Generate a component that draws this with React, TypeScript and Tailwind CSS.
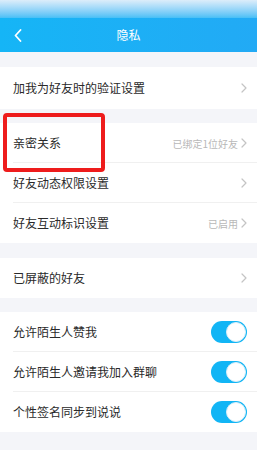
import React from "react";

const font = { fontFamily: '"Noto Sans CJK SC", "Noto Sans", sans-serif' };

function Chevron() {
  return (
    <svg width="6" height="10" viewBox="0 0 6 10" className="ml-[3px]">
      <path d="M1 1 L5 5 L1 9" fill="none" stroke="#c4c4c4" strokeWidth="1.2" strokeLinecap="round" strokeLinejoin="round" />
    </svg>
  );
}

function Toggle() {
  return (
    <div className="w-[36px] h-[22px] rounded-full bg-[#12b5f5] flex items-center justify-end pr-[1px]">
      <div className="w-[20px] h-[20px] rounded-full bg-white border border-[#d9eef8]" />
    </div>
  );
}

function Row({ label, right, toggle, divider, h = "h-[40px]" }: { label: string; right?: string; toggle?: boolean; divider?: boolean; h?: string }) {
  return (
    <div className={`relative ${h} flex items-center pl-[13px] pr-[10px] bg-white`}>
      <span className="text-[12px] text-[#2a2a2a] flex-1">{label}</span>
      {toggle ? (
        <Toggle />
      ) : (
        <div className="flex items-center">
          {right && <span className="text-[10px] text-[#b8b8b8]">{right}</span>}
          <Chevron />
        </div>
      )}
      {divider && <div className="absolute left-[13px] right-0 bottom-0 h-px bg-[#f0f0f0]" />}
    </div>
  );
}

export default function App() {
  return (
    <div className="relative w-[257px] h-[450px] bg-[#f4f5f9] overflow-hidden" style={font}>
      <div className="h-[52px] flex flex-col bg-gradient-to-r from-[#15b5f6] to-[#22aaf5]">
        <div className="h-[18px] bg-gradient-to-b from-[#dcedfa] to-[#46bff6]" />
        <div className="flex-1 relative flex items-center justify-center">
          <svg width="8" height="13" viewBox="0 0 8 13" className="absolute left-[14px] top-[11px]">
            <path d="M6.5 1 L1.5 6.5 L6.5 12" fill="none" stroke="#ffffff" strokeWidth="1.8" strokeLinecap="round" strokeLinejoin="round" />
          </svg>
          <span className="text-white text-[12px]">隐私</span>
        </div>
      </div>
      <div className="h-[15px]" />
      <Row label="加我为好友时的验证设置" h="h-[42px]" />
      <div className="h-[14px]" />
      <Row label="亲密关系" right="已绑定1位好友" divider />
      <Row label="好友动态权限设置" divider />
      <Row label="好友互动标识设置" right="已启用" />
      <div className="h-[15px]" />
      <Row label="已屏蔽的好友" />
      <div className="h-[14px]" />
      <Row label="允许陌生人赞我" toggle divider />
      <Row label="允许陌生人邀请我加入群聊" toggle divider />
      <Row label="个性签名同步到说说" toggle />
      <div className="absolute left-[3px] top-[113px] w-[102px] h-[59px] border-[4px] border-[#ee1c1c] rounded-[4px]" />
    </div>
  );
}
